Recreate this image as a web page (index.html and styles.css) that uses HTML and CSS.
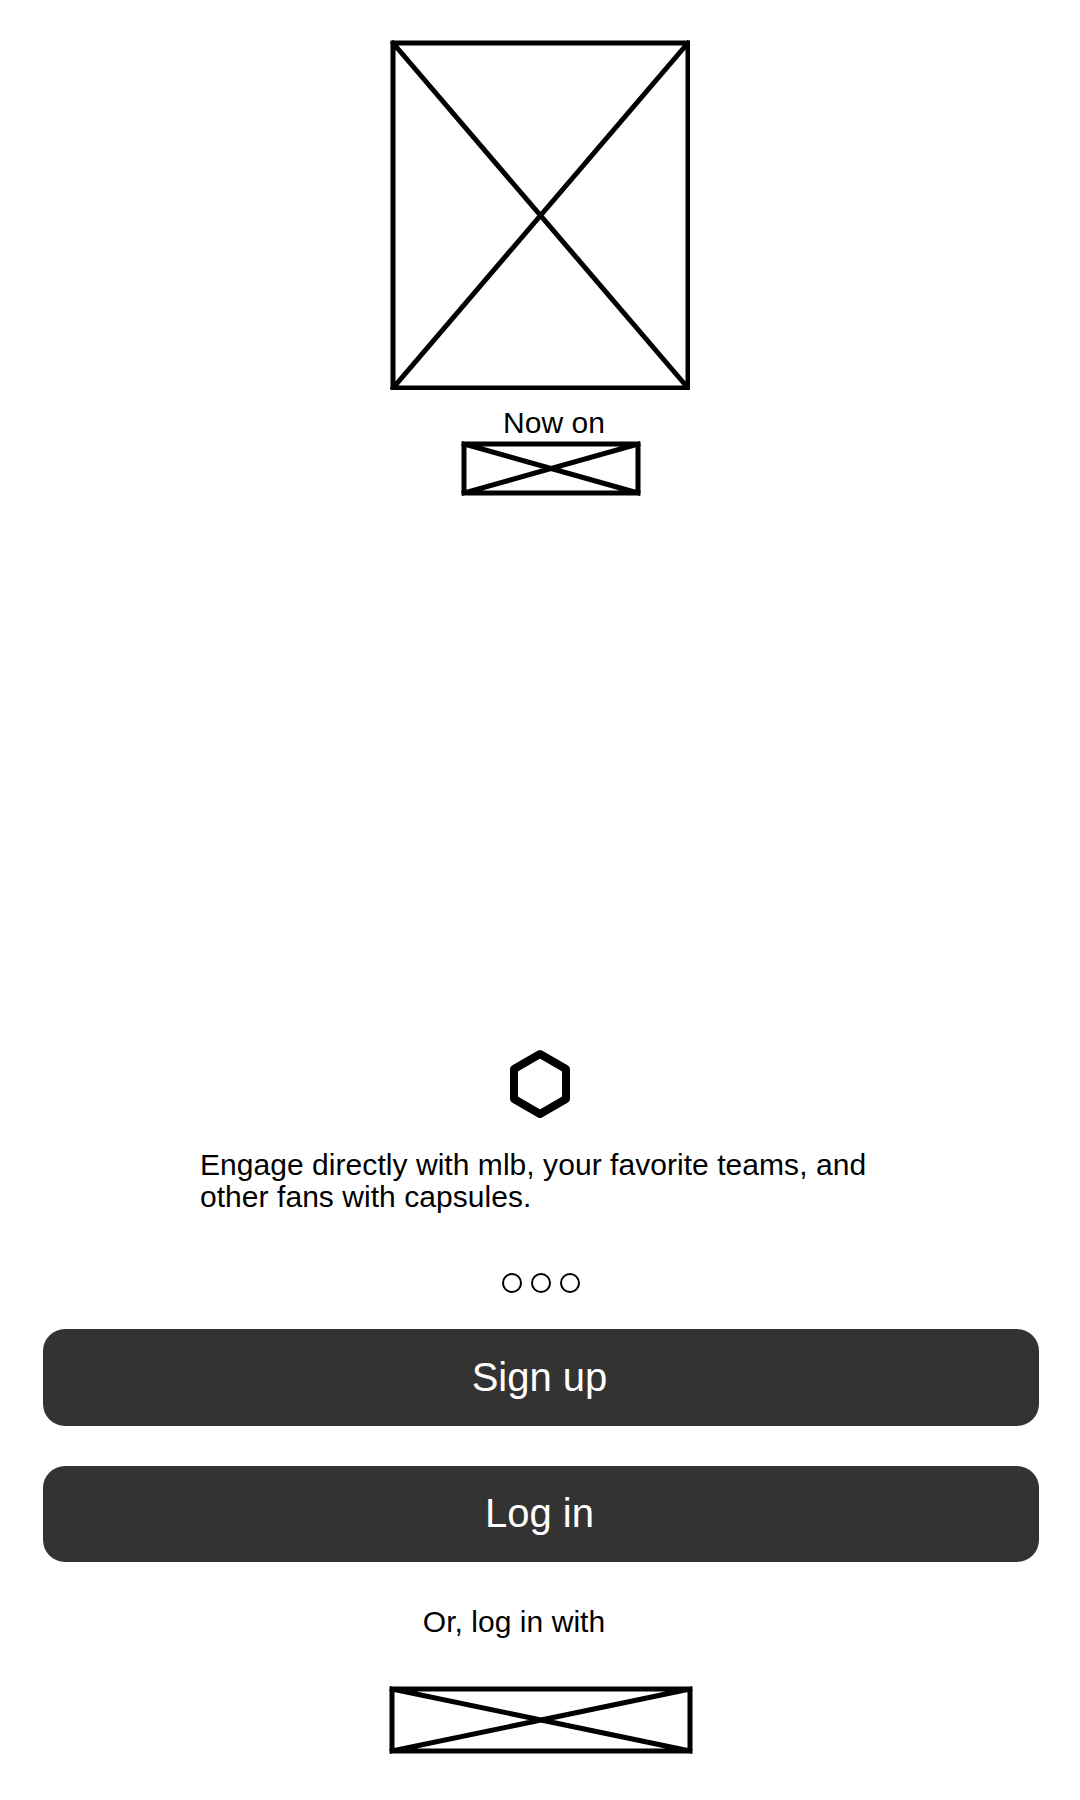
FILE: index.html
```html
<!DOCTYPE html>
<html lang="en">
<head>
  <meta charset="UTF-8" />
  <title>Welcome</title>
  <link rel="stylesheet" href="styles.css">
</head>
<body>
  <div class="screen">
    <section class="hero">
      <svg class="hero-img" width="300" height="350" viewBox="0 0 300 350">
        <path d="M3 3H298V348H3Z M3 3L298 348 M298 3L3 348" />
      </svg>
      <div class="partner">
        <div class="now-on">Now on</div>
        <svg class="partner-img" width="180" height="55" viewBox="0 0 180 55">
          <path d="M3 3H177V52H3Z M3 3L177 52 M177 3L3 52" />
        </svg>
      </div>
    </section>

    <section class="onboard">
      <svg class="hex" width="64" height="70" viewBox="0 0 64 70">
        <path d="M32 5L58 20V50L32 65L6 50V20Z" />
      </svg>
      <p class="intro">Engage directly with mlb, your favorite teams, and other fans with capsules.</p>
      <div class="dots">
        <span class="dot"></span>
        <span class="dot"></span>
        <span class="dot"></span>
      </div>
    </section>

    <section class="actions">
      <button class="btn">Sign up</button>
      <button class="btn">Log in</button>
      <div class="alt-login">Or, log in with</div>
      <svg class="alt-img" width="304" height="70" viewBox="0 0 304 70">
        <path d="M3 4H301V66H3Z M3 4L301 66 M301 4L3 66" />
      </svg>
    </section>
  </div>
</body>
</html>
```

FILE: styles.css
```css
* { box-sizing: border-box; }
body {
  margin: 0;
  background: #fff;
  color: #000;
  font-family: "Liberation Sans", Arial, sans-serif;
  font-size: 30px;
  letter-spacing: .05px;
}
.screen {
  width: 1080px;
  height: 1800px;
  display: flex;
  flex-direction: column;
}
svg { display: block; }
svg path { fill: none; stroke: #000; stroke-width: 5; stroke-linecap: square; }

.hero {
  display: flex;
  flex-direction: column;
  align-items: center;
  padding-top: 40px;
}
.partner {
  display: flex;
  flex-direction: column;
  align-items: center;
  padding-left: 22px;
}
.now-on { line-height: 32px; margin-top: 17px; padding-left: 6px; }
.partner-img { margin-top: 2px; }

.onboard {
  display: flex;
  flex-direction: column;
  align-items: center;
  margin-top: 553px;
}
.hex path { stroke-width: 8; stroke-linejoin: round; }
.intro {
  align-self: flex-start;
  width: 680px;
  margin: 30px 0 0 200px;
  line-height: 32px;
}
.dots {
  display: flex;
  gap: 9px;
  margin-top: 60px;
  padding-left: 2px;
}
.dot {
  width: 20px;
  height: 20px;
  border: 2.5px solid #000;
  border-radius: 50%;
}

.actions {
  display: flex;
  flex-direction: column;
  align-items: center;
  padding: 0 41px 0 43px;
  margin-top: 36px;
}
.btn {
  width: 100%;
  height: 96.5px;
  margin-bottom: 40px;
  padding: 0 3px 0 0;
  border: none;
  border-radius: 22px;
  background: #333;
  color: #fff;
  font-family: inherit;
  font-size: 40px;
}
.btn + .btn { margin-bottom: 0; }
.alt-login {
  margin-top: 44px;
  padding-right: 54px;
  line-height: 32px;
}
.alt-img { margin-top: 47px; }
```
